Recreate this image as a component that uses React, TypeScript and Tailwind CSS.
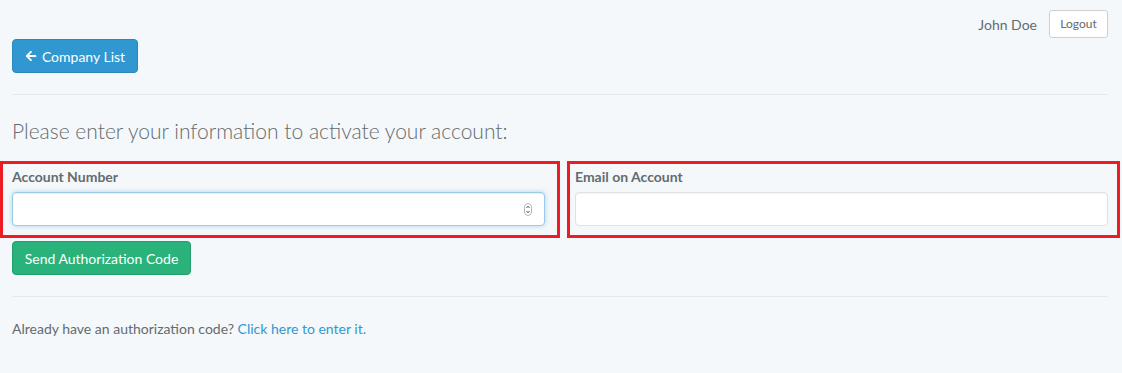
import { FaArrowLeft } from 'react-icons/fa';

function Spinner() {
  return (
    <svg width="8" height="13" viewBox="0 0 8 13" className="absolute right-[13px] top-[11px]">
      <rect x="0.5" y="0.5" width="7" height="12" rx="3.5" fill="#fff" stroke="#b5b9bc" />
      <path d="M2.5 5 L4 3.2 L5.5 5" fill="none" stroke="#555" strokeWidth="1" />
      <path d="M2.5 8 L4 9.8 L5.5 8" fill="none" stroke="#555" strokeWidth="1" />
    </svg>
  );
}

export default function App() {
  return (
    <div className="min-h-screen w-full bg-[#f5f8fa] text-[#636b6f] text-[14px] font-['Lato','Open_Sans',sans-serif]">
      <div className="flex items-center justify-end pt-[10px] pr-[14px]">
        <span className="text-[14px] text-[#636b6f]">John Doe</span>
        <button className="ml-[12px] h-[28px] w-[59px] rounded-[3px] border border-[#ccd0d2] bg-white text-[12px] text-[#636b6f]">
          Logout
        </button>
      </div>

      <div className="px-[12px]">
        <button className="mt-[1px] flex h-[34px] w-[126px] items-center justify-center gap-[5px] rounded-[4px] border border-[#2a88bd] bg-[#3097d1] text-[14px] text-white">
          <FaArrowLeft className="h-[12px] w-[12px]" />
          Company List
        </button>
        <div className="mt-[21px] mr-[2px] border-t border-[#e6e9ec]" />
        <h3 className="mt-[24px] text-[21px] font-light leading-[24px] text-[#636b6f]">
          Please enter your information to activate your account:
        </h3>
      </div>

      <div className="mt-[18px] flex">
        <div className="w-[560px] border-[3px] border-[#ed1c24] pl-[9px] pr-[12px] pt-[3px] pb-[9px]">
          <label className="block h-[20px] text-[14px] font-bold leading-[20px] text-[#636b6f]">Account Number</label>
          <div className="relative mt-[5px]">
            <input
              type="text"
              className="block h-[34px] w-full rounded-[4px] border border-[#98cbe8] bg-white outline-none shadow-[inset_0_1px_1px_rgba(0,0,0,0.075),0_0_5px_rgba(102,175,233,0.5)]"
            />
            <Spinner />
          </div>
        </div>
        <div className="ml-[7px] w-[553px] border-[3px] border-[#ed1c24] pl-[5px] pr-[9px] pt-[3px] pb-[9px]">
          <label className="block h-[20px] text-[14px] font-bold leading-[20px] text-[#636b6f]">Email on Account</label>
          <input
            type="email"
            className="mt-[5px] block h-[34px] w-full rounded-[4px] border border-[#dfe2e4] bg-white outline-none shadow-[inset_0_1px_1px_rgba(0,0,0,0.05)]"
          />
        </div>
      </div>

      <div className="px-[12px]">
        <button className="mt-[3px] h-[34px] w-[179px] rounded-[4px] border border-[#259d6d] bg-[#2ab27b] text-[14px] text-white">
          Send Authorization Code
        </button>
        <div className="mt-[21px] mr-[2px] border-t border-[#e6e9ec]" />
        <p className="mt-[22px] leading-[20px]">
          Already have an authorization code? <a className="text-[#3097d1]" href="#">Click here to enter it.</a>
        </p>
      </div>
    </div>
  );
}
